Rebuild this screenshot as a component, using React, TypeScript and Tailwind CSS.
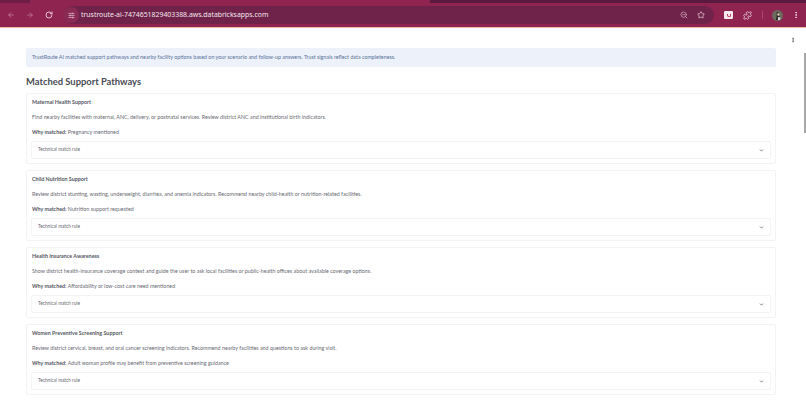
import React from 'react';
import { ArrowLeft, ArrowRight, RotateCw, SlidersHorizontal, ZoomOut, Star, Puzzle, MoreVertical, ChevronDown } from 'lucide-react';

const pathways = [
  {
    title: 'Maternal Health Support',
    body: 'Find nearby facilities with maternal, ANC, delivery, or postnatal services. Review district ANC and institutional birth indicators.',
    why: 'Pregnancy mentioned',
  },
  {
    title: 'Child Nutrition Support',
    body: 'Review district stunting, wasting, underweight, diarrhea, and anemia indicators. Recommend nearby child-health or nutrition-related facilities.',
    why: 'Nutrition support requested',
  },
  {
    title: 'Health Insurance Awareness',
    body: 'Show district health-insurance coverage context and guide the user to ask local facilities or public-health offices about available coverage options.',
    why: 'Affordability or low-cost care need mentioned',
  },
  {
    title: 'Women Preventive Screening Support',
    body: 'Review district cervical, breast, and oral cancer screening indicators. Recommend nearby facilities and questions to ask during visit.',
    why: 'Adult woman profile may benefit from preventive screening guidance',
  },
];

const PathwayCard = ({ title, body, why }: { title: string; body: string; why: string }) => (
  <div className="h-[71px] shrink-0 rounded-[2px] border border-[#f3f3f5] px-[4px] pt-[5px]">
    <div className="h-[7px] pl-[1px] text-[5.35px] leading-[7px] font-bold text-[#55565f]">{title}</div>
    <div className="mt-[8px] h-[7px] pl-[1px] text-[5.35px] leading-[7px] text-[#696a73]">{body}</div>
    <div className="mt-[7.5px] h-[7px] pl-[1px] text-[5.35px] leading-[7px] text-[#696a73]">
      <span className="font-bold text-[#55565f]">Why matched:</span> {why}
    </div>
    <div className="mt-[5.5px] flex h-[18px] items-center justify-between rounded-[2px] border border-[#f3f3f5] pr-[6px] pl-[6px]">
      <span className="text-[4.7px] text-[#696a73]">Technical match rule</span>
      <ChevronDown size={5} strokeWidth={3.5} className="text-[#55565f]" />
    </div>
  </div>
);

export default function App() {
  return (
    <div className="flex h-[408px] w-[806px] flex-col overflow-hidden bg-white font-['Lato',sans-serif]">
      {/* Browser chrome */}
      <div className="h-[28px] shrink-0 border-b border-[#f3b9a8] bg-[#8f2450] font-['Noto_Sans',sans-serif]">
        <div className="flex h-[3px]">
          <div className="w-[30px] bg-[#6f1d47]" />
          <div className="w-[400px] bg-[#8f2450]" />
          <div className="flex-1 bg-[#5a1a3f]" />
        </div>
        <div className="flex h-[24px] items-center">
          <div className="flex w-[63px] items-center pl-[7px] text-[#c98aa5]">
            <ArrowLeft size={8} />
            <ArrowRight size={8} className="ml-[11px]" />
            <RotateCw size={8} strokeWidth={2.5} className="ml-[11px] text-[#f3dfe7]" />
          </div>
          <div className="flex h-[18px] w-[651px] items-center rounded-full bg-[#70234a]">
            <div className="flex h-[16px] w-[16px] items-center justify-center rounded-full bg-[#8a2a55]">
              <SlidersHorizontal size={7} className="text-[#f3dfe7]" />
            </div>
            <span className="ml-[2px] flex-1 text-[6.9px] text-[#f3e3ea]">trustroute-ai-7474651829403388.aws.databricksapps.com</span>
            <ZoomOut size={8} className="text-[#d9b3c5]" />
            <Star size={8} className="mr-[9px] ml-[9px] text-[#f3dfe7]" />
          </div>
          <div className="ml-[10px] flex h-[8px] w-[9px] items-center justify-center rounded-[1px] bg-[#f7e9ee]">
            <div className="h-[3px] w-[4px] rounded-b-[2px] border border-t-0 border-[#b8325a]" />
          </div>
          <Puzzle size={9} className="ml-[10px] text-[#f3dfe7]" />
          <div className="ml-[10px] h-[8px] w-px bg-[#a5486f]" />
          <svg width="11" height="11" viewBox="0 0 11 11" className="ml-[9px] shrink-0">
            <circle cx="5.5" cy="5.5" r="5.5" fill="#6b6a5c" />
            <path d="M5 1.5 L8 4 L7.5 10 L4 10 Z" fill="#2f2a28" />
            <circle cx="6.5" cy="4.5" r="1.3" fill="#d8c4ae" />
            <path d="M6 7 L8.5 7.5 L8 10 L6 10 Z" fill="#d9dbe0" />
          </svg>
          <MoreVertical size={8} strokeWidth={3} className="ml-[9px] text-[#f3dfe7]" />
        </div>
      </div>

      {/* Page */}
      <div className="flex min-h-0 flex-1">
        <div className="flex min-w-0 flex-1 flex-col pt-[20px] pl-[26px]">
          <div className="flex h-[19px] w-[750px] shrink-0 items-start rounded-[2px] bg-[#ecf1fa] pt-[5.5px] pl-[6px] text-[5.35px] leading-[7px] text-[#5a7299]">
            TrustRoute AI matched support pathways and nearby facility options based on your scenario and follow-up answers. Trust signals reflect data completeness.
          </div>
          <h2 className="mt-[7.5px] h-[14px] shrink-0 text-[9.4px] leading-[14px] font-bold text-[#4a4b55]">Matched Support Pathways</h2>
          <div className="mt-[4.5px] flex w-[750px] flex-col gap-[6px]">
            {pathways.map((p) => (
              <PathwayCard key={p.title} {...p} />
            ))}
          </div>
        </div>
        <div className="relative w-[30px] shrink-0">
          <MoreVertical size={6} strokeWidth={3} className="absolute top-[9px] left-[14px] text-[#55565f]" />
          <div className="absolute top-[25px] right-0 h-[80px] w-[2px] bg-[#a8a8a8]" />
        </div>
      </div>
    </div>
  );
}
